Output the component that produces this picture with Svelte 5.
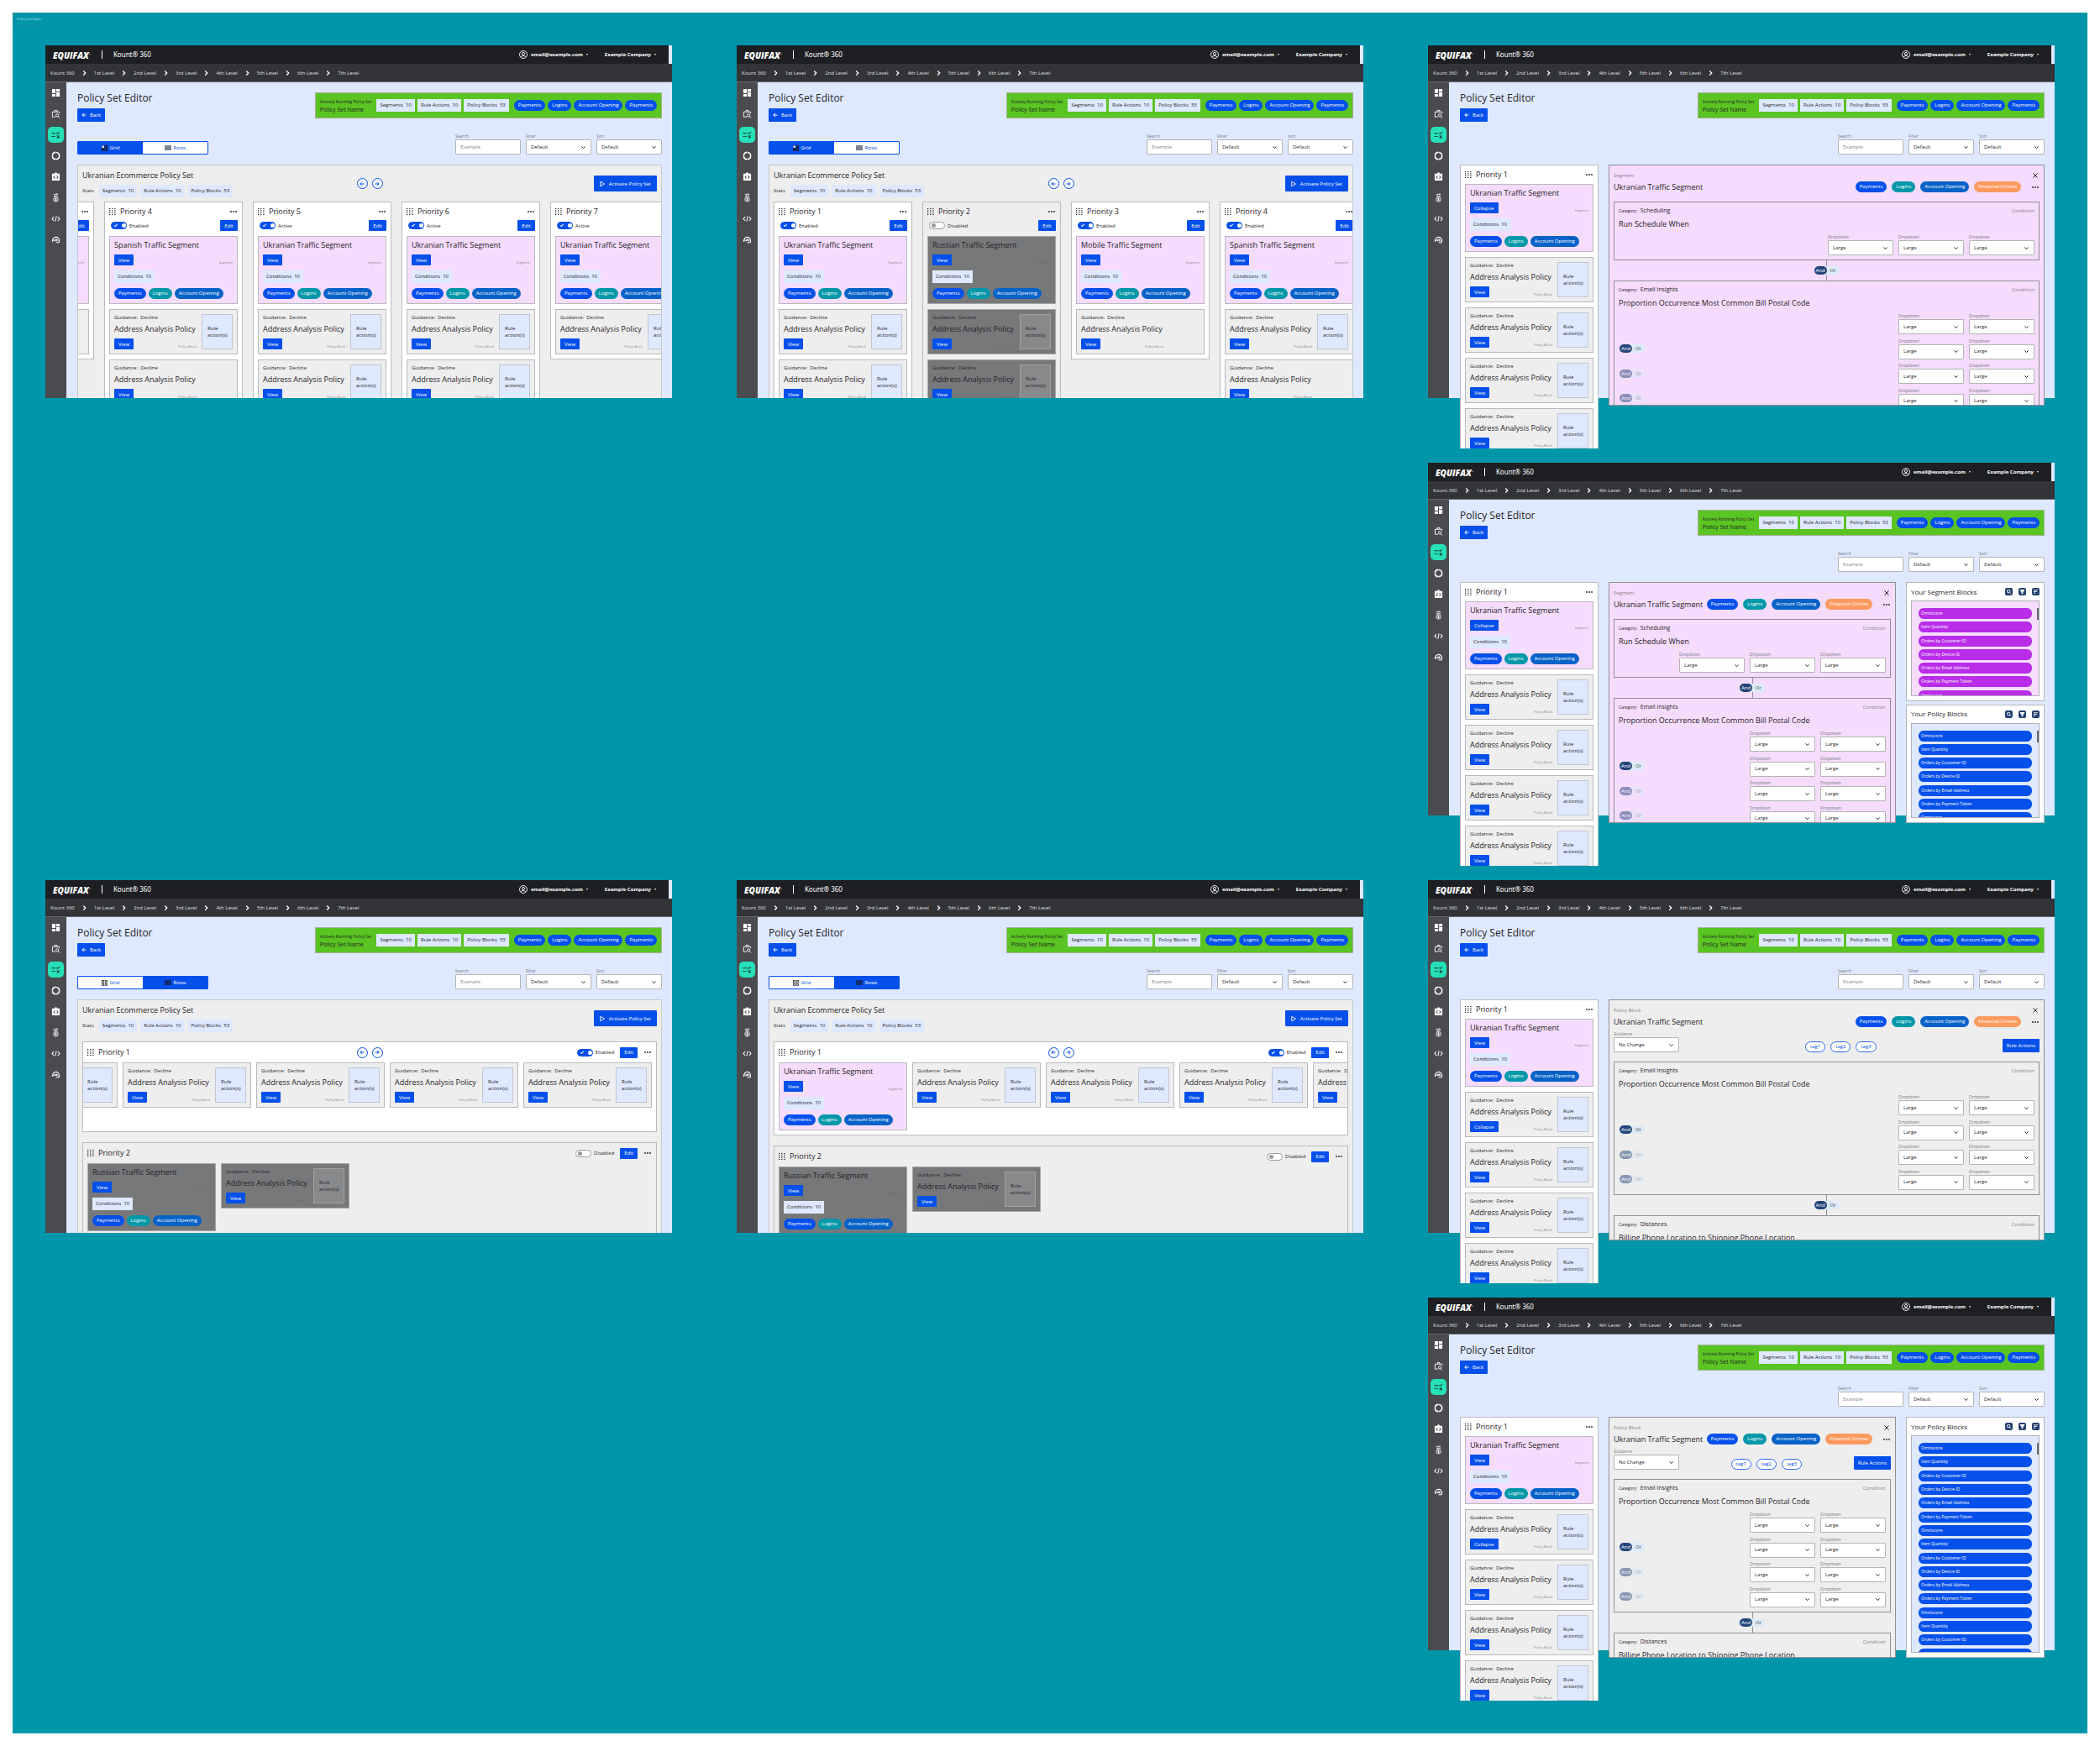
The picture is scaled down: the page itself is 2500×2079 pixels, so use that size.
<script lang="ts">
  type Block = { rule?: boolean; open?: boolean };
  type Priority = {
    name: string;
    status?: string;
    disabled?: boolean;
    segment?: string;
    open?: boolean;
    blocks: Block[];
  };
  type Screen = {
    view: "grid" | "rows" | "segment" | "policy";
    scroll?: number;
    priorities: Priority[];
    lists?: string[];
  };

  const UKR = "Ukranian Traffic Segment";
  const crumbs = ["Kount 360", "1st Level", "2nd Level", "3rd Level", "4th Level", "5th Level", "6th Level", "7th Level"];
  const stats = [["Segments", 10], ["Rule Actions", 10], ["Policy Blocks", 53]];
  const blockNames = [
    "Omniscore",
    "Item Quantity",
    "Orders by Customer ID",
    "Orders by Device ID",
    "Orders by Email Address",
    "Orders by Payment Token",
  ];
  const navIcons = ["dashboard", "case", "rules", "ring", "badge", "money", "code", "agent"];

  const rules = (n: number): Block[] => Array.from({ length: n }, () => ({ rule: true }));

  const russian: Priority = { name: "Priority 2", status: "Disabled", disabled: true, segment: "Russian Traffic Segment", blocks: rules(2) };
  const russianRow: Priority = { ...russian, blocks: rules(1) };
  const mobile: Priority = { name: "Priority 3", status: "Enabled", segment: "Mobile Traffic Segment", blocks: [{}] };
  const spanish: Priority = { name: "Priority 4", status: "Enabled", segment: "Spanish Traffic Segment", blocks: [{ rule: true }, {}] };
  const active = (n: number, count: number): Priority => ({ name: `Priority ${n}`, status: "Active", segment: UKR, blocks: rules(count) });
  const first: Priority = { name: "Priority 1", status: "Enabled", segment: UKR, blocks: rules(2) };
  const segmentOpen: Priority = { name: "Priority 1", segment: UKR, open: true, blocks: rules(4) };
  const policyOpen: Priority = { name: "Priority 1", segment: UKR, blocks: [{ rule: true, open: true }, ...rules(3)] };

  const screens: Screen[] = [
    { view: "grid", scroll: 151, priorities: [mobile, spanish, active(5, 2), active(6, 2), active(7, 1)] },
    { view: "grid", priorities: [first, russian, mobile, spanish] },
    { view: "segment", priorities: [segmentOpen] },
    { view: "segment", priorities: [segmentOpen], lists: ["Segment", "Policy"] },
    { view: "rows", scroll: 9999, priorities: [{ ...first, segment: undefined, blocks: rules(5) }, russianRow] },
    { view: "rows", priorities: [{ ...first, blocks: rules(4) }, russianRow] },
    { view: "policy", priorities: [policyOpen] },
    { view: "policy", priorities: [policyOpen], lists: ["Policy"] },
  ];

  // the strips open at a given scroll position
  const scrollTo = (node: HTMLElement, left: number) => {
    node.scrollLeft = left;
  };

  const listItems = (count: number) => Array.from({ length: count }, (_, i) => blockNames[i % blockNames.length]);
</script>

{#snippet navIcon(name: string)}
  <svg viewBox="0 0 24 24" width="11" height="11" fill="currentColor" aria-hidden="true">
    {#if name === "dashboard"}
      <path d="M2 13h9V2H2v11zm0 9h9v-7H2v7zm11 0h9V11h-9v11zm0-20v7h9V2h-9z" />
    {:else if name === "case"}
      <path d="M9 7V3h6v4M11 20H3V7h18v4M18 19l4 4" fill="none" stroke="currentColor" stroke-width="2" />
      <circle cx="15.500" cy="16" r="3.600" fill="none" stroke="currentColor" stroke-width="2" />
    {:else if name === "rules"}
      <path d="M1 7h10v2H1zM1 15h10v2H1zM16.500 11l-3.500-3.500 1.400-1.400 2.100 2.100L20.800 4l1.400 1.400zM22 14.400L20.600 13 18 15.600 15.400 13 14 14.400 16.600 17 14 19.600 15.400 21 18 18.400 20.600 21 22 19.600 19.400 17z" />
    {:else if name === "ring"}
      <circle cx="12" cy="12" r="9" fill="none" stroke="currentColor" stroke-width="3.400" stroke-dasharray="13.130 1" />
    {:else if name === "badge"}
      <path fill-rule="evenodd" d="M2 4h6.500a3.500 3.500 0 0 1 7 0H22v18H2zM10.500 10L9 8.800 5 13l4 4.200 1.500-1.300L8 13zM13.500 10L16 13l-2.500 2.900L15 17.200 19 13l-4-4.200z" />
    {:else if name === "money"}
      <circle cx="12" cy="16" r="6" fill="none" stroke="currentColor" stroke-width="2" />
      <path d="M6 3h11M17 3l-3-2M7 7h11M7 7l3 2M14 13.500h-3.500v2.500h3v2.500H10M12 12v8" fill="none" stroke="currentColor" stroke-width="1.800" />
    {:else if name === "code"}
      <path d="M7 7l-5 5 5 5M17 7l5 5-5 5M13.500 5l-3 14" fill="none" stroke="currentColor" stroke-width="2.200" />
    {:else}
      <path d="M4 16c-2-14 18-14 16-2v5h-8" fill="none" stroke="currentColor" stroke-width="2.400" />
      <path d="M2 12h3v5H2zM20 12h2v5h-2zM7 12c4 0 6-2 6-4 1 3 3 4 5 4h-1v2h-2v-1h-2c0 2-4 2-6 1z" />
      <circle cx="9.500" cy="14.500" r="1.400" />
      <circle cx="14.500" cy="14.500" r="1.400" />
    {/if}
  </svg>
{/snippet}

{#snippet arrow(dir: string)}
  <svg viewBox="0 0 12 12" width="6" height="6" fill="none" stroke="currentColor" stroke-width="2" aria-hidden="true">
    {#if dir === "left"}
      <path d="M11 6H2M6 1.500L1.500 6 6 10.500" />
    {:else}
      <path d="M1 6h9M6 1.500L10.500 6 6 10.500" />
    {/if}
  </svg>
{/snippet}

{#snippet arrows()}
  <div class="arrows">
    <button class="round" aria-label="Previous">{@render arrow("left")}</button>
    <button class="round" aria-label="Next">{@render arrow("right")}</button>
  </div>
{/snippet}

{#snippet statChips()}
  {#each stats as [label, value]}
    <span class="chip">{label}&nbsp; {value}</span>
  {/each}
{/snippet}

{#snippet select(label: string, value: string)}
  <label class="field">
    <span>{label}</span>
    <span class="control">
      <select><option>{value}</option></select>
      <svg viewBox="0 0 10 10" width="5" height="5" fill="none" stroke="#222" stroke-width="2" aria-hidden="true"><path d="M1 3l4 4 4-4" /></svg>
    </span>
  </label>
{/snippet}

{#snippet andOr(dim: boolean)}
  <div class="andor" class:dim role="group" aria-label="Operator">
    <button aria-pressed="true">And</button>
    <button aria-pressed="false">Or</button>
  </div>
{/snippet}

{#snippet more()}
  <button class="more" aria-label="More">
    <svg viewBox="0 0 16 4" width="8" height="2" fill="#1b1b1f" aria-hidden="true"><circle cx="2" cy="2" r="1.800" /><circle cx="8" cy="2" r="1.800" /><circle cx="14" cy="2" r="1.800" /></svg>
  </button>
{/snippet}

{#snippet handle(name: string)}
  <svg class="dots" viewBox="0 0 14 14" width="8" height="8" fill="#1b1b1f" aria-hidden="true">
    {#each [0, 1, 2, 3] as row}
      {#each [0, 1, 2] as col}
        <rect x={col * 5.500} y={row * 4} width="2.200" height="2" />
      {/each}
    {/each}
  </svg>
  <h3>{name}</h3>
{/snippet}

{#snippet statusToggle(p: Priority)}
  <label class="toggle">
    <input type="checkbox" checked={!p.disabled} />
    {p.status}
  </label>
{/snippet}

{#snippet segmentBox(p: Priority)}
  <article class="segment" class:off={p.disabled}>
    <h4>{p.segment}</h4>
    <div class="between">
      <button class="btn">{p.open ? "Collapse" : "View"}</button>
      <small>Segment</small>
    </div>
    <span class="chip">Conditions&nbsp; 10</span>
    <div class="pills">
      <span class="pill">Payments</span>
      <span class="pill teal">Logins</span>
      <span class="pill sea">Account Opening</span>
    </div>
  </article>
{/snippet}

{#snippet blockBox(b: Block, off: boolean)}
  <article class="block" class:off>
    <div class="info">
      <p>Guidance:&nbsp; Decline</p>
      <h4>Address Analysis Policy</h4>
      <div class="between">
        <button class="btn">{b.open ? "Collapse" : "View"}</button>
        <small>Policy Block</small>
      </div>
    </div>
    {#if b.rule}
      <div class="rule">Rule action(s)</div>
    {/if}
  </article>
{/snippet}

{#snippet cards(p: Priority)}
  {#if p.segment}{@render segmentBox(p)}{/if}
  {#each p.blocks as b}
    {@render blockBox(b, !!p.disabled)}
  {/each}
{/snippet}

{#snippet condition(category: string, title: string, rows: number, cols: number)}
  <section class="condition">
    <div class="between">
      <p><span class="tiny">Category:</span>&nbsp; {category}</p>
      <span class="muted">Condition</span>
    </div>
    <h4>{title}</h4>
    <div class="rules" class:tall={rows > 1}>
      {#each Array(rows) as _, r}
        <div class="rule-row">
          {#if r > 0}{@render andOr(r > 1)}{/if}
          {#each Array(cols) as _}
            {@render select("Dropdown", "Large")}
          {/each}
        </div>
      {/each}
    </div>
  </section>
{/snippet}

{#snippet detail(view: string)}
  <section class="detail" class:pink={view === "segment"}>
    <div class="between top">
      <span class="muted">{view === "segment" ? "Segment" : "Policy Block"}</span>
      <button class="more" aria-label="Close">
        <svg viewBox="0 0 12 12" width="6" height="6" fill="none" stroke="#1b1b1f" stroke-width="2" aria-hidden="true"><path d="M1 1l10 10M11 1L1 11" /></svg>
      </button>
    </div>
    <div class="between title-row">
      <h4>{UKR}</h4>
      <div class="pills wide">
        <span class="pill">Payments</span>
        <span class="pill teal">Logins</span>
        <span class="pill sea">Account Opening</span>
        <span class="pill orange">Financial Crimes</span>
        {@render more()}
      </div>
    </div>
    {#if view === "policy"}
      <div class="between guidance">
        {@render select("Guidance", "No Change")}
        <div class="pills wide">
          <span class="pill tag">tag1</span>
          <span class="pill tag">tag2</span>
          <span class="pill tag">tag3</span>
        </div>
        <button class="btn big">Rule Actions</button>
      </div>
    {/if}
    <div class="conditions">
      {#if view === "segment"}
        {@render condition("Scheduling", "Run Schedule When", 1, 3)}
        <div class="connector">{@render andOr(false)}</div>
      {/if}
      {@render condition("Email Insights", "Proportion Occurrence Most Common Bill Postal Code", 4, 2)}
      {#if view === "policy"}
        <div class="connector">{@render andOr(false)}</div>
        {@render condition("Distances", "Billing Phone Location to Shipping Phone Location", 1, 3)}
      {/if}
    </div>
  </section>
{/snippet}

{#snippet blockList(kind: string, count: number)}
  <section class="library">
    <header>
      <h3>Your {kind} Blocks</h3>
      <button aria-label="Search">
        <svg viewBox="0 0 16 16" width="7" height="7" fill="none" stroke="currentColor" stroke-width="2" aria-hidden="true"><circle cx="7" cy="7" r="4" /><path d="M10 10l4 4" /></svg>
      </button>
      <button aria-label="Filter">
        <svg viewBox="0 0 16 16" width="7" height="7" fill="currentColor" aria-hidden="true"><path d="M2 2h12v3l-4 4v5H6V9L2 5z" /></svg>
      </button>
      <button aria-label="Sort">
        <svg viewBox="0 0 16 16" width="7" height="7" stroke="currentColor" stroke-width="2" aria-hidden="true"><path d="M2 4h12M2 8h9M2 12h5" /></svg>
      </button>
    </header>
    <div class="list" class:pink={kind === "Segment"}>
      <ul style:height="{Math.round((count * 49) / 3)}px">
        {#each listItems(count) as item}
          <li>{item}</li>
        {/each}
      </ul>
      <i class="thumb"></i>
    </div>
  </section>
{/snippet}

<div class="board">
  <span class="board-name">Policy Set Editor</span>
  <div class="screens">
    {#each screens as s}
      {@const split = s.view === "segment" || s.view === "policy"}
      <div class="screen" class:right={split}>
        <header class="topbar">
          <span class="logo">EQUIFAX<sup>™</sup></span>
          <span class="product">Kount® 360</span>
          <button class="account">
            <svg viewBox="0 0 20 20" width="10" height="10" fill="none" stroke="currentColor" stroke-width="1.800" aria-hidden="true"><circle cx="10" cy="10" r="9" /><circle cx="10" cy="8" r="3.200" /><path d="M4 16c2-4 10-4 12 0" /></svg>
            email@example.com <i class="caret"></i>
          </button>
          <button class="account">Example Company <i class="caret"></i></button>
        </header>
        <nav class="crumbs" aria-label="Breadcrumb">
          {#each crumbs as crumb, i}
            {#if i > 0}
              <svg viewBox="0 0 10 12" width="5" height="6" fill="none" stroke="#fff" stroke-width="2.600" aria-hidden="true"><path d="M2.500 1L7.500 6l-5 5" /></svg>
            {/if}
            <a href="#{i}">{crumb}</a>
          {/each}
        </nav>
        <div class="body">
          <nav class="side" aria-label="Main">
            {#each navIcons as name}
              <a href="#{name}" class:current={name === "rules"} aria-label={name}>{@render navIcon(name)}</a>
            {/each}
          </nav>
          <main>
            <div class="head">
              <div>
                <h1>Policy Set Editor</h1>
                <button class="btn big back">{@render arrow("left")} Back</button>
              </div>
              <div class="running">
                <div class="names">
                  <p>Actively Running Policy Set</p>
                  <strong>Policy Set Name</strong>
                </div>
                <div class="pills">{@render statChips()}</div>
                <div class="pills">
                  <span class="pill">Payments</span>
                  <span class="pill">Logins</span>
                  <span class="pill">Account Opening</span>
                  <span class="pill">Payments</span>
                </div>
              </div>
            </div>

            <div class="toolbar">
              {#if !split}
                <div class="switch" role="group" aria-label="View">
                  <button class:on={s.view === "grid"} aria-pressed={s.view === "grid"}>
                    <svg viewBox="0 0 14 14" width="7" height="7" aria-hidden="true">
                      {#if s.view === "grid"}
                        <rect width="14" height="14" rx="1" fill="#11224f" />
                        <rect x="1" y="1" width="5" height="5" fill="#dfe9ff" />
                        <path d="M8 1v12M8 7h5" stroke="#0550ea" />
                      {:else}
                        <g fill="#ccc" stroke="#333" stroke-width="1.500"><rect x="1" y="1" width="4.500" height="5" /><rect x="8.500" y="1" width="4.500" height="5" /><rect x="1" y="8.500" width="4.500" height="4.500" /><rect x="8.500" y="8.500" width="4.500" height="4.500" /></g>
                      {/if}
                    </svg>
                    Grid
                  </button>
                  <button class:on={s.view === "rows"} aria-pressed={s.view === "rows"}>
                    <svg viewBox="0 0 16 12" width="8" height="6" aria-hidden="true">
                      <rect width="16" height="12" fill={s.view === "rows" ? "#12307f" : "#8b94a8"} />
                      <path d="M0 0h16M0 4h16M0 8h16M0 12h16" stroke={s.view === "rows" ? "#101c4c" : "#55565a"} />
                    </svg>
                    Rows
                  </button>
                </div>
              {/if}
              <div class="filters">
                <label class="field">
                  <span>Search</span>
                  <input type="text" placeholder="Example" />
                </label>
                {@render select("Filter", "Default")}
                {@render select("Sort", "Default")}
              </div>
            </div>

            {#if split}
              <div class="split">
                <section class="priority pinned">
                  <header>{@render handle(s.priorities[0].name)}{@render more()}</header>
                  {@render cards(s.priorities[0])}
                </section>
                {@render detail(s.view)}
                {#if s.lists}
                  <aside>
                    {#each s.lists as kind}
                      {@render blockList(kind, s.lists.length > 1 ? 7 : 16)}
                    {/each}
                  </aside>
                {/if}
              </div>
            {:else}
              <section class="panel">
                <div class="panel-head">
                  <div>
                    <h2>Ukranian Ecommerce Policy Set</h2>
                    <div class="stats"><span>Stats</span>{@render statChips()}</div>
                  </div>
                  {#if s.view === "grid"}{@render arrows()}{/if}
                  <button class="btn activate">
                    <svg viewBox="0 0 12 14" width="6" height="8" fill="none" stroke="currentColor" stroke-width="1.800" aria-hidden="true"><path d="M1.500 1.500L11 7l-9.500 5.500z" /></svg>
                    Activate Policy Set
                  </button>
                </div>
                {#if s.view === "grid"}
                  <div class="strip" use:scrollTo={s.scroll ?? 0}>
                    {#each s.priorities as p}
                      <section class="priority" class:disabled={p.disabled}>
                        <header>{@render handle(p.name)}{@render more()}</header>
                        <div class="between state">
                          {@render statusToggle(p)}
                          <button class="btn">Edit</button>
                        </div>
                        {@render cards(p)}
                      </section>
                    {/each}
                  </div>
                {:else}
                  <div class="rows">
                    {#each s.priorities as p, i}
                      <section class="row" class:disabled={p.disabled}>
                        <header>
                          <div class="row-name">{@render handle(p.name)}</div>
                          {#if i === 0}{@render arrows()}{/if}
                          <div class="row-tools">
                            {@render statusToggle(p)}
                            <button class="btn">Edit</button>
                            {@render more()}
                          </div>
                        </header>
                        <div class="lane" use:scrollTo={s.scroll ?? 0}>{@render cards(p)}</div>
                      </section>
                    {/each}
                  </div>
                {/if}
              </section>
            {/if}
          </main>
        </div>
      </div>
    {/each}
  </div>
</div>

<style>
  :global(body) {
    background: #fff;
  }

  .board {
    position: relative;
    margin: 15px;
    padding: 39px 39px 99px;
    background: #0096aa;
    color: #1f2226;
    font: 6px/8px "Open Sans", sans-serif;
  }
  .board-name {
    position: absolute;
    top: 0;
    left: 0;
    padding: 3px 3px 2px 4px;
    border: 1px solid #078ba0;
    color: #b5e2e8;
    font-size: 4px;
  }
  .screens {
    display: grid;
    grid-template-columns: repeat(3, minmax(0, 1fr));
    gap: 77px;
  }
  .screen {
    display: flex;
    flex-direction: column;
    height: 420px;
    background: #dee9ff;
  }
  .screen.right {
    grid-column: 3;
  }

  h1, h2, h3, h4, p, ul {
    margin: 0;
    padding: 0;
    font-weight: 400;
  }
  h1 {
    font-size: 12px;
    line-height: 14px;
    margin-bottom: 5px;
  }
  h2, h3, h4 {
    font-size: 9px;
    line-height: 12px;
    white-space: nowrap;
  }
  button, input, select {
    box-sizing: border-box;
    margin: 0;
    padding: 0;
    border: 0;
    background: none;
    color: inherit;
    font: inherit;
  }
  button {
    cursor: pointer;
    white-space: nowrap;
  }
  svg {
    display: block;
    flex: none;
  }
  .between {
    display: flex;
    justify-content: space-between;
    align-items: center;
  }

  .topbar {
    display: flex;
    align-items: center;
    flex: none;
    height: 22px;
    margin-right: 4px;
    padding: 0 15px 0 9px;
    background: #1e1f23;
    color: #fff;
    font-family: "Noto Sans", sans-serif;
  }
  .logo {
    margin-right: 13px;
    font: italic 800 10px/12px "Open Sans", sans-serif;
  }
  .logo sup {
    font-size: 3px;
    font-weight: 400;
    vertical-align: 4px;
  }
  .product {
    margin-right: auto;
    padding-left: 13px;
    border-left: 1px solid #fff;
    font-size: 8px;
    line-height: 10px;
  }
  .account {
    display: flex;
    align-items: center;
    gap: 4px;
    margin-left: 20px;
    font-weight: 700;
  }
  .caret {
    border: 1px solid transparent;
    border-top: 2px solid #fff;
    border-bottom: 0;
  }
  .crumbs {
    display: flex;
    align-items: center;
    gap: 9px;
    flex: none;
    box-sizing: border-box;
    height: 22px;
    padding: 0 6px;
    background: #333438;
    border-bottom: 1px solid #66686d;
    font-family: "Noto Sans", sans-serif;
  }
  .crumbs a {
    color: #d8d9dc;
    text-decoration: none;
  }
  .body {
    display: flex;
    flex: 1;
    min-height: 0;
  }
  .side {
    display: flex;
    flex-direction: column;
    align-items: center;
    gap: 6px;
    width: 25px;
    padding-top: 3px;
    box-sizing: border-box;
    background: #4a4b4f;
  }
  .side a {
    display: flex;
    align-items: center;
    justify-content: center;
    width: 19px;
    height: 19px;
    border-radius: 5px;
    color: #fff;
  }
  .side a.current {
    background: #26e0b8;
    color: #17302c;
  }

  main {
    display: flex;
    flex-direction: column;
    flex: 1;
    min-width: 0;
    padding: 12px 12px 0 13px;
  }
  .head {
    display: flex;
    justify-content: space-between;
    align-items: flex-start;
    height: 35px;
  }
  .running {
    display: flex;
    align-items: center;
    gap: 6px;
    box-sizing: border-box;
    height: 31px;
    padding: 0 5px;
    background: #5ac422;
    border: 1px solid #a5b09c;
  }
  .names p {
    margin-bottom: 2px;
    font-size: 5px;
  }
  .names strong {
    font-size: 7px;
    font-weight: 400;
  }

  .btn {
    display: flex;
    align-items: center;
    justify-content: center;
    gap: 4px;
    height: 13px;
    padding: 0 5px;
    border-radius: 1px;
    background: #0550ea;
    color: #fff;
  }
  .btn.big {
    height: 16px;
  }
  .btn.activate {
    justify-self: end;
    height: 19px;
    padding: 0 7px;
    gap: 5px;
  }
  .chip {
    align-self: flex-start;
    padding: 0 4px;
    background: #dee9ff;
    line-height: 15px;
    white-space: nowrap;
  }
  .pills {
    display: flex;
    align-items: center;
    gap: 3px;
  }
  .pills.wide {
    gap: 6px;
  }
  .pill {
    padding: 0 5px;
    border-radius: 7px;
    background: #0550ea;
    color: #fff;
    line-height: 13px;
    white-space: nowrap;
  }
  .pill.teal {
    background: #0097a9;
  }
  .pill.sea {
    background: #0762c8;
  }
  .pill.orange {
    background: #fb9a5e;
  }
  .pill.tag {
    border: 1px solid #2f68ee;
    background: #fff;
    color: #0550ea;
    line-height: 11px;
  }

  .toolbar {
    display: flex;
    align-items: flex-end;
    justify-content: space-between;
    margin: 14px 0 12px;
  }
  .switch {
    display: grid;
    grid-template-columns: 77px 77px;
    height: 16px;
    box-sizing: border-box;
    border: 1px solid #0550ea;
    border-radius: 1px;
    background: #fff;
  }
  .switch button {
    display: flex;
    align-items: center;
    justify-content: center;
    gap: 3px;
    color: #0550ea;
  }
  .switch button.on {
    background: #0550ea;
    color: #fff;
  }
  .filters {
    display: flex;
    gap: 6px;
    margin-left: auto;
  }
  .field {
    display: block;
    width: 78px;
    color: #77797e;
    font-size: 5px;
    line-height: 7px;
  }
  .field > span:first-child {
    display: block;
  }
  .field input,
  .field select {
    display: block;
    width: 100%;
    height: 18px;
    padding: 0 5px;
    border: 1px solid #b4b4b4;
    border-radius: 1px;
    background: #fff;
    color: #1f2226;
    font-size: 6px;
    appearance: none;
  }
  .field input::placeholder {
    color: #85878b;
  }
  .control {
    display: grid;
    align-items: center;
  }
  .control > * {
    grid-area: 1 / 1;
  }
  .control svg {
    justify-self: end;
    margin-right: 7px;
    pointer-events: none;
  }

  .panel {
    display: flex;
    flex-direction: column;
    flex: 1;
    min-height: 0;
    overflow: hidden;
    background: #eee;
    border: 1px solid #c6c8cc;
    border-bottom: 0;
  }
  .panel-head {
    display: grid;
    grid-template-columns: 1fr auto 1fr;
    align-items: center;
    flex: none;
    height: 43px;
    padding: 0 5px;
  }
  .panel-head .activate {
    grid-column: 3;
  }
  .stats {
    display: flex;
    align-items: center;
    gap: 4px;
    margin-top: 5px;
  }
  .stats span:first-child {
    margin-right: 2px;
  }
  .arrows {
    display: flex;
    gap: 5px;
  }
  .round {
    display: flex;
    align-items: center;
    justify-content: center;
    width: 13px;
    height: 13px;
    border: 1px solid #0550ea;
    border-radius: 50%;
    background: #fff;
    color: #0550ea;
  }

  .strip {
    display: flex;
    align-items: flex-start;
    gap: 12px;
    flex: 1;
    min-height: 0;
    padding: 0 5px;
    overflow: hidden;
  }
  .priority {
    flex: none;
    box-sizing: border-box;
    width: 165px;
    padding: 0 5px 5px;
    border: 1px solid #bbbcbe;
    background: #fff;
  }
  .priority.disabled,
  .row.disabled {
    background: #eee;
  }
  .priority > header {
    display: flex;
    align-items: center;
    height: 21px;
  }
  .dots {
    margin-right: 5px;
  }
  .more {
    display: flex;
    justify-content: center;
    width: 10px;
    padding: 2px 0;
  }
  .priority .more {
    margin-left: auto;
  }
  .state {
    margin-bottom: 6px;
  }
  .toggle {
    display: flex;
    align-items: center;
    gap: 3px;
    padding-left: 2px;
  }
  .toggle input {
    display: flex;
    align-items: center;
    width: 19px;
    height: 9px;
    border: 1px solid #9a9b9e;
    border-radius: 5px;
    background: #fff;
    appearance: none;
  }
  .toggle input::before {
    content: "";
    width: 5px;
    height: 5px;
    margin-left: 2px;
    border-radius: 50%;
    background: #9a9b9e;
  }
  .toggle input:checked {
    border-color: #0550ea;
    background: #0550ea;
  }
  .toggle input:checked::before {
    width: 3px;
    height: 1px;
    margin: 0 5px 1px 3px;
    border: solid #fff;
    border-width: 0 0 1px 1px;
    border-radius: 0;
    background: none;
    transform: rotate(-45deg);
  }
  .toggle input:checked::after {
    content: "";
    width: 5px;
    height: 5px;
    border-radius: 50%;
    background: #fff;
  }

  .segment,
  .block {
    flex: none;
    box-sizing: border-box;
    border: 1px solid #b9b9bd;
  }
  .segment {
    display: flex;
    flex-direction: column;
    gap: 6px;
    padding: 4px 5px 5px;
    background: #f5dcfc;
  }
  .segment h4 {
    margin-bottom: -1px;
  }
  .segment .between,
  .block .between {
    align-items: flex-end;
  }
  small {
    color: #85828a;
    font-size: 4px;
    line-height: 6px;
  }
  .block {
    display: grid;
    grid-template-columns: 1fr 37px;
    gap: 6px;
    height: 54px;
    padding: 5px;
    background: #eee;
  }
  .block h4 {
    margin: 4px 0 5px;
  }
  .priority .block {
    margin-top: 6px;
  }
  .rule {
    display: flex;
    align-items: center;
    padding: 0 6px;
    border: 1px solid #c0c6d4;
    background: #dee9ff;
  }
  .off {
    background: #77787a;
    border-color: #a6a7a9;
  }
  .off small {
    color: #6f7072;
  }
  .off .rule {
    background: #88898b;
    border-color: #a0a1a3;
  }

  .rows {
    display: flex;
    flex-direction: column;
    gap: 12px;
    padding: 6px 5px 0;
  }
  .row {
    box-sizing: border-box;
    min-height: 108px;
    padding-bottom: 5px;
    border: 1px solid #bbbcbe;
    background: #fff;
  }
  .row > header {
    display: grid;
    grid-template-columns: 1fr auto 1fr;
    align-items: center;
    height: 24px;
    padding: 0 5px;
  }
  .row-name,
  .row-tools {
    display: flex;
    align-items: center;
  }
  .row-tools {
    grid-column: 3;
    justify-self: end;
    gap: 7px;
  }
  .lane {
    display: flex;
    align-items: flex-start;
    gap: 6px;
    padding: 0 5px;
    overflow: hidden;
  }
  .lane > :global(article) {
    width: 153px;
  }

  .split {
    display: flex;
    align-items: flex-start;
    gap: 12px;
  }
  .pinned {
    height: 338px;
    overflow: hidden;
    border-bottom: 0;
  }
  .pinned > header {
    padding-bottom: 1px;
  }
  .detail {
    flex: 1;
    min-width: 0;
    box-sizing: border-box;
    height: 287px;
    padding: 4px 5px 0;
    overflow: hidden;
    background: #eee;
    border: 1px solid #909096;
  }
  .pink {
    background: #f5dcfc;
  }
  .muted {
    color: #85828a;
  }
  .tiny {
    font-size: 5px;
  }
  .detail .top {
    height: 15px;
  }
  .title-row {
    height: 13px;
  }
  .guidance {
    align-items: flex-end;
    margin-top: 5px;
  }
  .title-row .more {
    margin-left: 6px;
  }
  .conditions {
    margin-top: 11px;
  }
  .condition {
    padding: 5px;
    border: 1px solid #909096;
  }
  .condition p {
    font-size: 7px;
    line-height: 9px;
  }
  .condition h4 {
    margin: 5px 0 6px;
  }
  .rules {
    display: flex;
    flex-direction: column;
    justify-content: space-between;
  }
  .rules.tall {
    height: 114px;
  }
  .rule-row {
    display: flex;
    align-items: center;
    justify-content: flex-end;
    gap: 6px;
  }
  .rule-row .andor {
    margin: 0 auto 0 1px;
  }
  .andor {
    display: flex;
    border-radius: 5px;
    background: #dcebf7;
  }
  .andor button {
    width: 15px;
    height: 10px;
    border-radius: 5px;
    color: #4b4d52;
  }
  .andor button:first-child {
    background: #24457a;
    color: #fff;
  }
  .andor.dim {
    opacity: 0.5;
  }
  .connector {
    display: flex;
    align-items: center;
    justify-content: center;
    height: 24px;
    background: linear-gradient(#909096, #909096) center / 1px 100% no-repeat;
  }

  aside {
    display: flex;
    flex-direction: column;
    gap: 4px;
    width: 165px;
    height: 287px;
  }
  .library {
    display: flex;
    flex-direction: column;
    flex: 1;
    min-height: 0;
    padding: 0 5px 5px;
    border: 1px solid #b4b6ba;
    background: #fff;
  }
  .library header {
    display: flex;
    align-items: center;
    gap: 7px;
    height: 21px;
  }
  .library h3 {
    margin-right: auto;
    font-size: 8px;
  }
  .library button {
    display: flex;
    align-items: center;
    justify-content: center;
    width: 9px;
    height: 9px;
    border-radius: 2px;
    background: #24406e;
    color: #fff;
  }
  .list {
    position: relative;
    flex: 1;
    min-height: 0;
    overflow: hidden;
    padding: 8px 8px 0;
    border: 1px solid #b0b0b6;
    background: #dee9ff;
  }
  .list.pink {
    background: #f5dcfc;
  }
  .list ul {
    display: grid;
    grid-auto-rows: 1fr;
    list-style: none;
  }
  .list li {
    align-self: start;
    padding: 0 3px;
    border-radius: 6px;
    background: #0550ea;
    color: #fff;
    font-size: 5px;
    line-height: 13px;
  }
  .list.pink li {
    background: #b92ce8;
  }
  .thumb {
    position: absolute;
    top: 8px;
    right: 0;
    width: 2px;
    height: 14px;
    background: #66686d;
  }
</style>
